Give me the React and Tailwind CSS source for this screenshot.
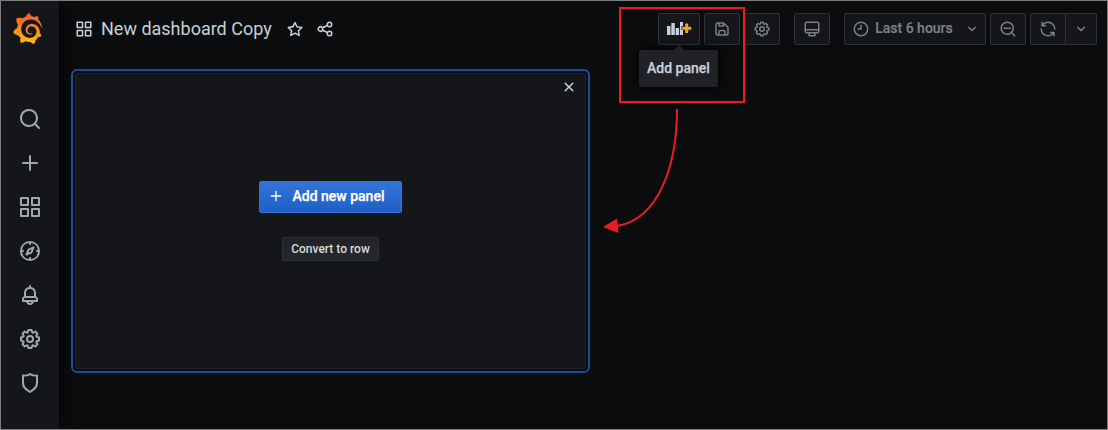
import React from "react";
import { SiGrafana } from "react-icons/si";

const paths = {
  apps: "M10,13H3a1,1,0,0,0-1,1v7a1,1,0,0,0,1,1h7a1,1,0,0,0,1-1V14A1,1,0,0,0,10,13ZM9,20H4V15H9ZM21,2H14a1,1,0,0,0-1,1v7a1,1,0,0,0,1,1h7a1,1,0,0,0,1-1V3A1,1,0,0,0,21,2ZM20,9H15V4h5Zm1,4H14a1,1,0,0,0-1,1v7a1,1,0,0,0,1,1h7a1,1,0,0,0,1-1V14A1,1,0,0,0,21,13Zm-1,7H15V15h5ZM10,2H3A1,1,0,0,0,2,3v7a1,1,0,0,0,1,1h7a1,1,0,0,0,1-1V3A1,1,0,0,0,10,2ZM9,9H4V4H9Z",
  search: "M21.71,20.29,18,16.61A9,9,0,1,0,16.61,18l3.68,3.68a1,1,0,0,0,1.42,0A1,1,0,0,0,21.71,20.29ZM11,18a7,7,0,1,1,7-7A7,7,0,0,1,11,18Z",
  plus: "M19,11H13V5a1,1,0,0,0-2,0v6H5a1,1,0,0,0,0,2h6v6a1,1,0,0,0,2,0V13h6a1,1,0,0,0,0-2Z",
  bell: "M18,13.18V10a6,6,0,0,0-5-5.91V3a1,1,0,0,0-2,0V4.09A6,6,0,0,0,6,10v3.18A3,3,0,0,0,4,16v2a1,1,0,0,0,1,1H8.14a4,4,0,0,0,7.72,0H19a1,1,0,0,0,1-1V16A3,3,0,0,0,18,13.18ZM8,10a4,4,0,0,1,8,0v3H8Zm4,10a2,2,0,0,1-1.72-1h3.44A2,2,0,0,1,12,20Zm6-3H6V16a1,1,0,0,1,1-1H17a1,1,0,0,1,1,1Z",
  shield: "M19.63,3.65a1,1,0,0,0-.84-.2,8,8,0,0,1-6.22-1.27,1,1,0,0,0-1.14,0A8,8,0,0,1,5.21,3.45a1,1,0,0,0-.84.2A1,1,0,0,0,4,4.43v7.45a9,9,0,0,0,3.77,7.33l3.65,2.6a1,1,0,0,0,1.16,0l3.65-2.6A9,9,0,0,0,20,11.88V4.43A1,1,0,0,0,19.63,3.65ZM18,11.88a7,7,0,0,1-2.93,5.7L12,19.77,8.93,17.58A7,7,0,0,1,6,11.88V5.58a10,10,0,0,0,6-1.39,10,10,0,0,0,6,1.39Z",
  cog: "M21.32,9.55l-1.89-.63.89-1.78A1,1,0,0,0,20.13,6L18,3.87a1,1,0,0,0-1.15-.19l-1.78.89-.63-1.89A1,1,0,0,0,13.5,2h-3a1,1,0,0,0-.95.68L8.92,4.57,7.14,3.68A1,1,0,0,0,6,3.87L3.87,6a1,1,0,0,0-.19,1.15l.89,1.78-1.89.63A1,1,0,0,0,2,10.5v3a1,1,0,0,0,.68.95l1.89.63-.89,1.78A1,1,0,0,0,3.87,18L6,20.13a1,1,0,0,0,1.15.19l1.78-.89.63,1.89a1,1,0,0,0,.95.68h3a1,1,0,0,0,.95-.68l.63-1.89,1.78.89A1,1,0,0,0,18,20.13L20.13,18a1,1,0,0,0,.19-1.15l-.89-1.78,1.89-.63A1,1,0,0,0,22,13.5v-3A1,1,0,0,0,21.32,9.55ZM20,12.78l-1.2.4A2,2,0,0,0,17.64,16l.57,1.14-1.1,1.1L16,17.64a2,2,0,0,0-2.79,1.16l-.4,1.2H11.22l-.4-1.2A2,2,0,0,0,8,17.64l-1.14.57-1.1-1.1L6.36,16A2,2,0,0,0,5.2,13.18L4,12.78V11.22l1.2-.4A2,2,0,0,0,6.36,8L5.79,6.89l1.1-1.1L8,6.36A2,2,0,0,0,10.82,5.2l.4-1.2h1.56l.4,1.2A2,2,0,0,0,16,6.36l1.14-.57,1.1,1.1L17.64,8a2,2,0,0,0,1.16,2.79l1.2.4ZM12,8a4,4,0,1,0,4,4A4,4,0,0,0,12,8Zm0,6a2,2,0,1,1,2-2A2,2,0,0,1,12,14Z",
  compass: "M12,2A10,10,0,1,0,22,12,10,10,0,0,0,12,2Zm1,17.93V19a1,1,0,0,0-2,0v.93A8,8,0,0,1,4.07,13H5a1,1,0,0,0,0-2H4.07A8,8,0,0,1,11,4.07V5a1,1,0,0,0,2,0V4.07A8,8,0,0,1,19.93,11H19a1,1,0,0,0,0,2h.93A8,8,0,0,1,13,19.93ZM15.14,7.55l-5,2.12a1,1,0,0,0-.52.52l-2.12,5a1,1,0,0,0,.21,1.1,1,1,0,0,0,.7.3.93.93,0,0,0,.4-.09l5-2.12a1,1,0,0,0,.52-.52l2.12-5a1,1,0,0,0-1.31-1.31Zm-2.49,5.1-2.28,1,1-2.28,2.28-1Z",
  star: "M22,9.67A1,1,0,0,0,21.14,9l-5.69-.83L12.9,3a1,1,0,0,0-1.8,0L8.55,8.16,2.86,9a1,1,0,0,0-.81.68,1,1,0,0,0,.25,1l4.13,4-1,5.68A1,1,0,0,0,6.9,21.44L12,18.77l5.1,2.67a.93.93,0,0,0,.46.12,1,1,0,0,0,.59-.19,1,1,0,0,0,.4-1l-1-5.68,4.13-4A1,1,0,0,0,22,9.67Zm-6.15,4a1,1,0,0,0-.29.88l.72,4.2-3.76-2a1.06,1.06,0,0,0-.94,0l-3.76,2,.72-4.2a1,1,0,0,0-.29-.88l-3-3,4.21-.61a1,1,0,0,0,.76-.55L12,5.7l1.88,3.82a1,1,0,0,0,.76.55l4.21.61Z",
  share: "M18,14a4,4,0,0,0-3.08,1.48l-5.1-2.35a3.64,3.64,0,0,0,0-2.26l5.1-2.35A4,4,0,1,0,14,6a4.17,4.17,0,0,0,.07.71L8.79,9.14a4,4,0,1,0,0,5.72l5.28,2.43A4.17,4.17,0,0,0,14,18a4,4,0,1,0,4-4ZM18,4a2,2,0,1,1-2,2A2,2,0,0,1,18,4ZM6,14a2,2,0,1,1,2-2A2,2,0,0,1,6,14Zm12,6a2,2,0,1,1,2-2A2,2,0,0,1,18,20Z",
  save: "M20.71,9.29l-6-6a1,1,0,0,0-.32-.21A1.09,1.09,0,0,0,14,3H6A3,3,0,0,0,3,6V18a3,3,0,0,0,3,3H18a3,3,0,0,0,3-3V10A1,1,0,0,0,20.71,9.29ZM9,5h4V7H9Zm6,14H9V16a1,1,0,0,1,1-1h4a1,1,0,0,1,1,1Zm4-1a1,1,0,0,1-1,1H17V16a3,3,0,0,0-3-3H10a3,3,0,0,0-3,3v3H6a1,1,0,0,1-1-1V6A1,1,0,0,1,6,5H7V8A1,1,0,0,0,8,9h6a1,1,0,0,0,1-1V6.41l4,4Z",
  monitor: "M19,2H5A3,3,0,0,0,2,5V15a3,3,0,0,0,3,3H7.64l-.58,1a2,2,0,0,0,0,2,2,2,0,0,0,1.75,1h6.46A2,2,0,0,0,17,21a2,2,0,0,0,0-2l-.59-1H19a3,3,0,0,0,3-3V5A3,3,0,0,0,19,2ZM8.77,20,10,18H14l1.2,2ZM20,15a1,1,0,0,1-1,1H5a1,1,0,0,1-1-1V14H20Zm0-3H4V5A1,1,0,0,1,5,4H19a1,1,0,0,1,1,1Z",
  clock: "M12,2A10,10,0,1,0,22,12,10,10,0,0,0,12,2Zm0,18a8,8,0,1,1,8-8A8,8,0,0,1,12,20ZM12,6a1,1,0,0,0-1,1v4H8a1,1,0,0,0,0,2h4a1,1,0,0,0,1-1V7A1,1,0,0,0,12,6Z",
  zoomOut: "M21.71,20.29,18,16.61A9,9,0,1,0,16.61,18l3.68,3.68a1,1,0,0,0,1.42,0A1,1,0,0,0,21.71,20.29ZM11,18a7,7,0,1,1,7-7A7,7,0,0,1,11,18Zm4-8H7a1,1,0,0,0,0,2h8a1,1,0,0,0,0-2Z",
  sync: "M19.91,15.51H15.38a1,1,0,0,0,0,2h2.4A8,8,0,0,1,4,12a1,1,0,1,0-2,0,10,10,0,0,0,16.88,7.23V21a1,1,0,0,0,2,0V16.5A1,1,0,0,0,19.91,15.51ZM12,2A10,10,0,0,0,5.12,4.77V3a1,1,0,0,0-2,0V7.5a1,1,0,0,0,1,1h4.5a1,1,0,0,0,0-2H6.22A8,8,0,0,1,20,12a1,1,0,0,0,2,0A10,10,0,0,0,12,2Z",
  down: "M17,9.17a1,1,0,0,0-1.41,0L12,12.71,8.46,9.17a1,1,0,0,0-1.41,0,1,1,0,0,0,0,1.42l4.24,4.24a1,1,0,0,0,1.42,0L17,10.59A1,1,0,0,0,17,9.17Z",
  times: "M13.41,12l4.3-4.29a1,1,0,1,0-1.42-1.42L12,10.59,7.71,6.29A1,1,0,0,0,6.29,7.71L10.59,12l-4.3,4.29a1,1,0,0,0,0,1.42,1,1,0,0,0,1.42,0L12,13.41l4.29,4.3a1,1,0,0,0,1.42,0,1,1,0,0,0,0-1.42Z",
};

function Icon({ name, className = "size-[19px]" }) {
  return (
    <svg viewBox="0 0 24 24" fill="currentColor" className={`shrink-0 ${className}`}>
      <path d={paths[name]} />
    </svg>
  );
}

const toolButton =
  "flex h-8 items-center justify-center border border-[#2c3235] bg-[#141619] pb-px text-[#7b8087]";

function Logo() {
  return (
    <>
      <svg className="absolute size-0">
        <defs>
          <linearGradient id="flame" x1="0" y1="1" x2="0" y2="0">
            <stop offset="0" stopColor="#fcc30f" />
            <stop offset="0.3" stopColor="#f99a1c" />
            <stop offset="1" stopColor="#f05a28" />
          </linearGradient>
        </defs>
      </svg>
      <SiGrafana fill="url(#flame)" className="mr-[5px] size-[31px]" />
    </>
  );
}

function AddPanelIcon() {
  return (
    <svg viewBox="0 0 26 16" className="h-4 w-[26px]">
      <g fill="#c7d0d9">
        <rect x="1" y="5" width="3.500" height="9" />
        <rect x="5.300" y="2" width="3.500" height="12" />
        <rect x="9.600" y="7" width="3.500" height="7" />
        <path d="M14 1h3v4h-1.500v4H17v5h-3z" />
      </g>
      <path d="M19.200 2.500h3v3.200h3v3h-3v3.200h-3V8.700h-3v-3h3z" fill="#f9a21b" />
    </svg>
  );
}

function Sidebar() {
  const items = ["search", "plus", "apps", "compass", "bell", "cog", "shield"];
  return (
    <nav className="flex w-[58px] shrink-0 flex-col items-center bg-[#141619] pt-[12px] shadow-[0_0_12px_#000]">
      <Logo />
      <div className="mt-[53px] flex flex-col items-center text-[#9fa7b3]">
        {items.map((name) => (
          <div key={name} className="flex h-11 items-center">
            <Icon name={name} className="size-6" />
          </div>
        ))}
      </div>
    </nav>
  );
}

function Toolbar() {
  return (
    <div className="flex">
      <div className="relative">
        <button className={`${toolButton} w-[42px] rounded-[2px]`}>
          <AddPanelIcon />
        </button>
        <div className="absolute top-[37px] left-[-19px] flex h-[37px] w-[79px] items-center justify-center rounded-[2px] bg-[#202226] pb-0.5 text-sm font-medium whitespace-nowrap text-[#c7d0d9] shadow-[0_0_10px_#000] [-webkit-text-stroke:0.25px_#c7d0d9]">
          <svg viewBox="0 0 10 5" className="absolute -top-[5px] left-[35px] h-[5px] w-[10px]">
            <path d="M0 5 5 0l5 5z" fill="#202226" />
          </svg>
          Add panel
        </div>
      </div>
      <button className={`${toolButton} ml-1 w-9 rounded-[2px]`}>
        <Icon name="save" className="size-[18px]" />
      </button>
      <button className={`${toolButton} ml-1 w-9 rounded-[2px]`}>
        <Icon name="cog" className="size-[18px]" />
      </button>
      <button className={`${toolButton} ml-3.5 w-9 rounded-[2px]`}>
        <Icon name="monitor" className="size-[18px]" />
      </button>
      <button className={`${toolButton} ml-3.5 w-[142px] rounded-[2px]`}>
        <Icon name="clock" className="ml-[3px] size-[18px]" />
        <span className="ml-[5px] pb-px text-sm font-medium [-webkit-text-stroke:0.2px_#7b8087]">Last 6 hours</span>
        <Icon name="down" className="ml-2.5 size-[18px]" />
      </button>
      <button className={`${toolButton} ml-1 w-9 rounded-[2px]`}>
        <Icon name="zoomOut" className="size-[18px]" />
      </button>
      <button className={`${toolButton} ml-1 w-9 rounded-l-[2px]`}>
        <Icon name="sync" className="size-[18px]" />
      </button>
      <button className={`${toolButton} w-[31px] rounded-r-[2px] border-l-0`}>
        <Icon name="down" className="size-[18px]" />
      </button>
    </div>
  );
}

function AddPanelWidget() {
  return (
    <section className="mt-6 ml-3 h-[304px] w-[519px] rounded-md border-2 border-[#1a4d9c] p-0.5">
      <div className="flex h-full flex-col rounded-[3px] border border-[#202226] bg-[#141619]">
        <div className="flex justify-end pt-1 pr-[7px] text-[#c7d0d9]">
          <Icon name="times" className="size-[18px]" />
        </div>
        <div className="mt-[85px] flex flex-col items-center gap-6">
          <button className="flex h-8 w-[143px] items-center rounded-[2px] border border-[#3274d9] bg-linear-to-b from-[#3274d9] to-[#1f60c4] pb-0.5 pl-2 text-sm font-medium text-white [-webkit-text-stroke:0.25px_#ffffff]">
            <Icon name="plus" className="size-4" />
            <span className="ml-[8.500px]">Add new panel</span>
          </button>
          <button className="flex h-6 w-[97px] items-center justify-center rounded-[2px] border border-[#2c3235] bg-linear-to-b from-[#202226] to-[#25292d] text-xs font-medium text-[#d8d9da]">
            Convert to row
          </button>
        </div>
      </div>
    </section>
  );
}

function Callout() {
  return (
    <svg viewBox="0 0 1108 430" className="pointer-events-none absolute inset-0 h-[430px] w-[1108px]">
      <g fill="none" stroke="#ec1c24" strokeWidth="2">
        <rect x="620" y="8" width="124" height="94" />
        <path d="M677 109C677 165 659 219 617 226" />
      </g>
      <path d="M603 227 617 218.500 618.500 233z" fill="#ec1c24" />
    </svg>
  );
}

export default function App() {
  return (
    <div className="relative flex h-[430px] w-[1108px] overflow-hidden border border-[#7f7f7f] bg-[#0b0c0e] font-['Roboto',sans-serif]">
      <Sidebar />
      <main className="flex grow flex-col">
        <header className="flex h-11 items-start justify-between pt-3 pr-2.5 pl-4">
          <div className="flex h-8 items-center text-[#c7d0d9]">
            <Icon name="apps" className="size-[18px]" />
            <h1 className="ml-2 text-lg">New dashboard Copy</h1>
            <Icon name="star" className="ml-3.5 size-[18px]" />
            <Icon name="share" className="ml-3 size-[18px]" />
          </div>
          <Toolbar />
        </header>
        <AddPanelWidget />
      </main>
      <div className="absolute -top-px -left-px">
        <Callout />
      </div>
    </div>
  );
}
